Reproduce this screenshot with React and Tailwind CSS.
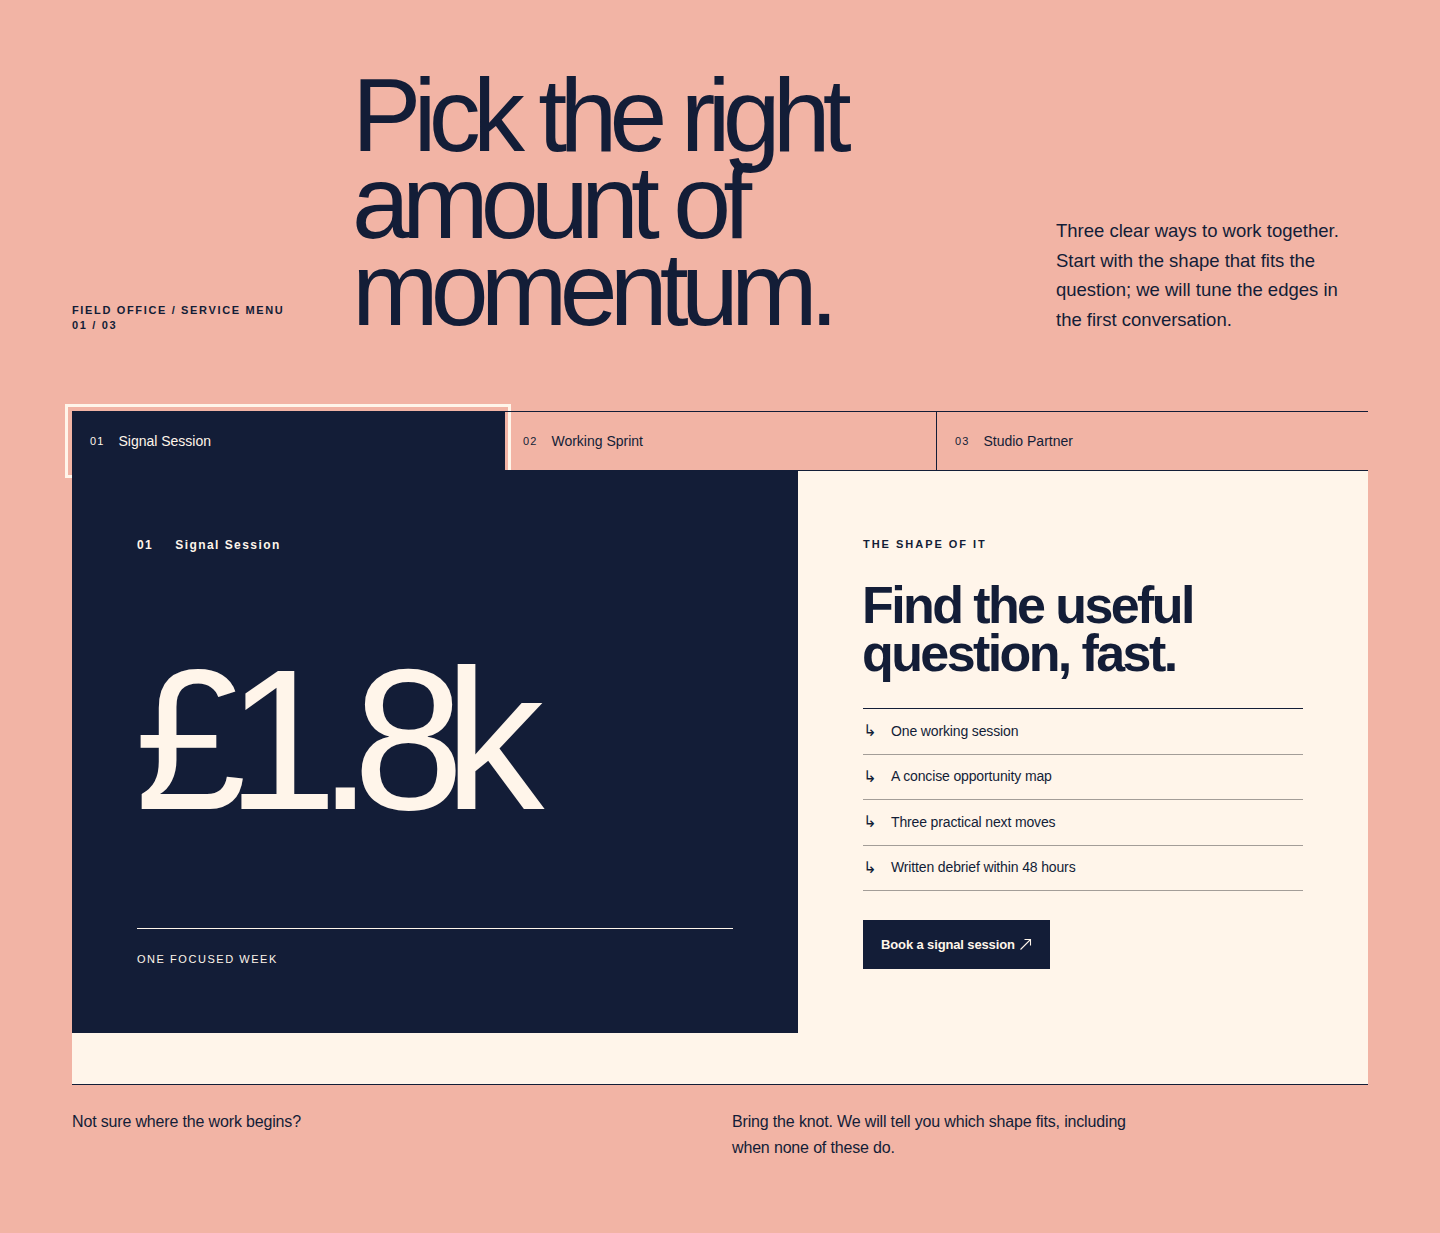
const tabs = [
  { num: "01", name: "Signal Session" },
  { num: "02", name: "Working Sprint" },
  { num: "03", name: "Studio Partner" },
];

const deliverables = [
  "One working session",
  "A concise opportunity map",
  "Three practical next moves",
  "Written debrief within 48 hours",
];

function ArrowUpRight() {
  return (
    <svg width="13" height="13" viewBox="0 0 13 13" fill="none" stroke="currentColor" strokeWidth="1.1" className="ml-[4px]">
      <path d="M1.5 11.5 L11.5 1.5" />
      <path d="M5.5 1.5 H11.5 V7.5" />
    </svg>
  );
}

export default function App() {
  const active = 0;

  return (
    <div className="min-h-screen bg-[#f2b4a5] px-[72px] pt-[72px] pb-[73px] text-[#131d37] font-['Liberation_Sans',Arial,sans-serif]">
      {/* header */}
      <header className="grid grid-cols-[283px_1fr_312px] items-end">
        <div className="text-[11px] font-bold uppercase leading-[15px] tracking-[0.15em]">
          <div>Field Office / Service Menu</div>
          <div>01 / 03</div>
        </div>
        <h1 className="-ml-[3px] text-[104px] leading-[87px] tracking-[-0.075em]">
          Pick the right
          <br />
          amount of
          <br />
          momentum.
        </h1>
        <p className="mb-[-1px] w-[300px] text-[18.5px] leading-[29.5px]">
          Three clear ways to work together. Start with the shape that fits the question; we will tune the edges in the
          first conversation.
        </p>
      </header>

      {/* tabs */}
      <div className="mt-[78px] grid grid-cols-3">
        {tabs.map((tab, i) => (
          <button
            key={tab.num}
            className={`flex h-[60px] items-center gap-[14px] border-y border-[#131d37] pl-[18px] text-left text-[14px] ${
              i > 0 ? "border-l" : ""
            } ${
              i === active
                ? "bg-[#131d37] text-[#fff5ea] outline-[3px] outline-offset-[4px] outline-[#fff5ea] outline-solid"
                : "text-[#131d37]"
            }`}
          >
            <span className="text-[11px] tracking-[0.1em]">{tab.num}</span>
            <span>{tab.name}</span>
          </button>
        ))}
      </div>

      {/* panel */}
      <section className="relative grid grid-cols-[726px_1fr] border-b border-[#131d37] bg-[#fff5ea] pb-[51px]">
        <div className="flex flex-col bg-[#131d37] px-[65px] pt-[66px] pb-[66px] text-[#fff5ea]">
          <div className="flex gap-[22px] text-[12px] font-bold leading-[16px] tracking-[0.12em]">
            <span>01</span>
            <span>Signal Session</span>
          </div>
          <div className="-ml-[2px] mt-[87px] text-[200px] leading-[200px] tracking-[-0.1em]">£1.8k</div>
          <div className="mt-[88px] border-t border-[#fff5ea]" />
          <div className="mt-[22px] text-[11px] uppercase leading-[16px] tracking-[0.14em]">One focused week</div>
        </div>

        <div className="pl-[65px] pr-[65px] pt-[65px]">
          <div className="text-[11px] font-bold uppercase leading-[16px] tracking-[0.18em]">The shape of it</div>
          <h2 className="-ml-[1px] mt-[29px] text-[52px] font-bold leading-[48px] tracking-[-0.05em]">
            Find the useful
            <br />
            question, fast.
          </h2>
          <ul className="mt-[31px] border-t border-[#131d37]">
            {deliverables.map((item) => (
              <li key={item} className="flex h-[45.5px] items-center border-b border-[#a39d98] text-[14px] tracking-[-0.01em]">
                <span className="w-[28px] font-['DejaVu_Sans',sans-serif] text-[16px] leading-none">↳</span>
                <span>{item}</span>
              </li>
            ))}
          </ul>
          <button className="mt-[29px] flex h-[49px] items-center bg-[#131d37] px-[18px] text-[13px] font-bold tracking-[-0.01em] text-[#fff5ea]">
            Book a signal session
            <ArrowUpRight />
          </button>
        </div>
      </section>

      {/* footer */}
      <footer className="grid grid-cols-[660px_1fr] pt-[24px] text-[16px] leading-[26px] tracking-[-0.01em]">
        <p>Not sure where the work begins?</p>
        <p className="max-w-[410px]">Bring the knot. We will tell you which shape fits, including when none of these do.</p>
      </footer>
    </div>
  );
}
